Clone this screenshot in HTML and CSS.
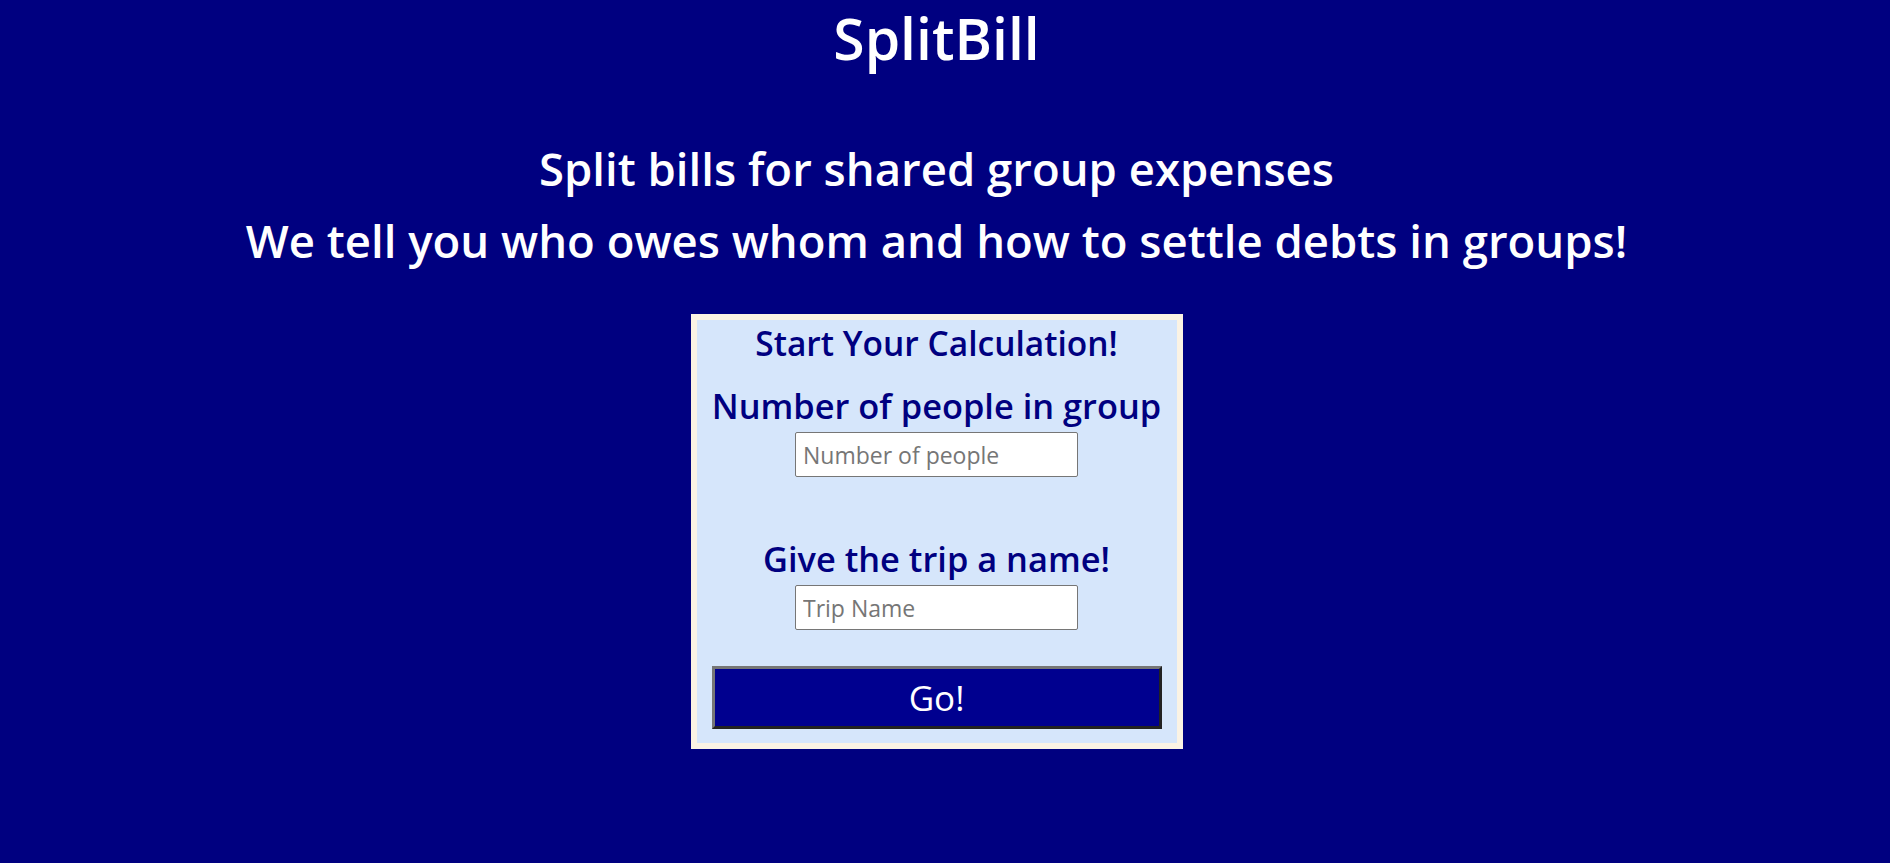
FILE: index.html
```html
<!DOCTYPE html>
<html lang="en">
<head>
<meta charset="utf-8">
<title>SplitBill</title>
<link rel="stylesheet" href="styles.css">
</head>
<body>
<main class="page">
  <h1 class="title">SplitBill</h1>
  <h2 class="tagline">Split bills for shared group expenses</h2>
  <h2 class="tagline">We tell you who owes whom and how to settle debts in groups!</h2>
  <form class="card">
    <h3 class="card-title">Start Your Calculation!</h3>
    <label class="field-label" for="people">Number of people in group</label>
    <input class="field" id="people" type="text" placeholder="Number of people">
    <label class="field-label second" for="trip">Give the trip a name!</label>
    <input class="field" id="trip" type="text" placeholder="Trip Name">
    <button class="go" type="button">Go!</button>
  </form>
</main>
</body>
</html>
```

FILE: styles.css
```css
html, body {
  margin: 0;
  padding: 0;
  background: #000080;
}

body {
  font-family: "Open Sans", "Noto Sans", sans-serif;
  color: #ffffff;
  padding-right: 17px;
}

.page {
  display: flex;
  flex-direction: column;
  align-items: center;
  text-align: center;
}

.title {
  margin: 3px 0 0;
  font-size: 57px;
  line-height: 70px;
  font-weight: 600;
}

.title + .tagline {
  margin-top: 59px;
}

.tagline {
  margin: 0;
  font-size: 45.5px;
  line-height: 72px;
  font-weight: 600;
}

.card {
  margin-top: 38px;
  width: 492px;
  box-sizing: border-box;
  border: 6px solid #fbf3e4;
  background: #d6e6fb;
  padding: 3px 15px 14px;
  display: flex;
  flex-direction: column;
  align-items: center;
  color: #000080;
}

.card-title {
  margin: 0;
  font-size: 33.5px;
  line-height: 40px;
  font-weight: 600;
}

.field-label {
  margin-top: 23px;
  font-size: 34.4px;
  line-height: 40px;
  font-weight: 600;
}

.field-label.second {
  margin-top: 62px;
}

.field {
  margin-top: 6px;
  width: 283px;
  height: 45px;
  box-sizing: border-box;
  border: 1px solid #767676;
  border-radius: 2px;
  background: #ffffff;
  padding: 0 7px;
  font-family: "Open Sans", "Noto Sans", sans-serif;
  font-size: 23px;
  color: #000000;
}

.field::placeholder {
  color: #767676;
}

.go {
  margin-top: 36px;
  width: 450px;
  height: 63px;
  box-sizing: border-box;
  border-style: solid;
  border-width: 3px;
  border-color: #767676 #222222 #222222 #767676;
  background: #00008f;
  color: #ffffff;
  font-family: "Open Sans", "Noto Sans", sans-serif;
  font-size: 35px;
  font-weight: 400;
  padding: 0;
}
```
